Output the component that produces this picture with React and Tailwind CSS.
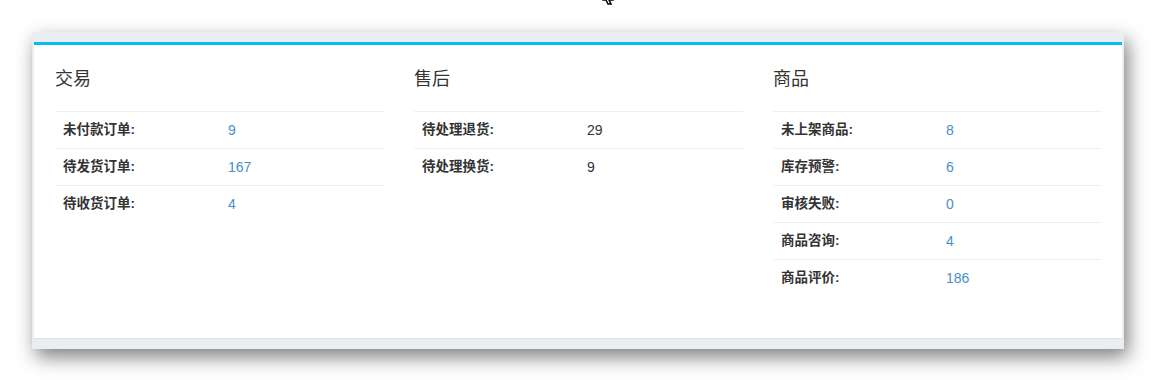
const sections = [
  {
    title: "交易",
    link: true,
    rows: [
      ["未付款订单:", "9"],
      ["待发货订单:", "167"],
      ["待收货订单:", "4"],
    ],
  },
  {
    title: "售后",
    link: false,
    rows: [
      ["待处理退货:", "29"],
      ["待处理换货:", "9"],
    ],
  },
  {
    title: "商品",
    link: true,
    rows: [
      ["未上架商品:", "8"],
      ["库存预警:", "6"],
      ["审核失败:", "0"],
      ["商品咨询:", "4"],
      ["商品评价:", "186"],
    ],
  },
];

function Section({ title, rows, link }) {
  return (
    <div>
      <h3 className="h-5 text-[18px] leading-5 font-normal text-[#333]">{title}</h3>
      <table className="mt-[22px] w-full border-collapse">
        <tbody>
          {rows.map(([label, value]) => (
            <tr key={label} className="h-[37px] border-t border-[#f0f0f0]">
              <td className="w-[165px] px-2 text-[13.5px] font-bold text-[#333]">
                {label}
              </td>
              <td
                className={`px-2 text-[14px] ${
                  link ? "text-[#4a8fc6]" : "text-[#333]"
                }`}
              >
                {value}
              </td>
            </tr>
          ))}
        </tbody>
      </table>
    </div>
  );
}

export default function App() {
  return (
    <div
      className="relative h-[380px] w-[1156px] overflow-hidden bg-white px-8 pt-8"
      style={{ fontFamily: '"Liberation Sans", "Noto Sans CJK SC", sans-serif' }}
    >
      {/* mouse cursor left in the capture */}
      <svg
        className="absolute left-[601px] top-[-6px]"
        width="14"
        height="12"
        viewBox="0 0 14 12"
      >
        <path
          d="M2 0 L2 6 L5 6 L7 10 L10 10 L8 6 L11 6 Z"
          fill="#fff"
          stroke="#000"
          strokeWidth="1.5"
        />
      </svg>

      <div className="bg-[#eaedf2] px-[2px] pt-[10px] pb-[10px] shadow-[4px_8px_18px_rgba(0,0,0,0.5)]">
        <div className="border-t-[3px] border-b border-t-[#00c0ef] border-b-[#dde1e6] bg-white pl-[21px] pr-[20px] pt-6 pb-[41px]">
          <div className="grid grid-cols-3 gap-[30px]">
            {sections.map((s) => (
              <Section key={s.title} {...s} />
            ))}
          </div>
        </div>
      </div>
    </div>
  );
}
